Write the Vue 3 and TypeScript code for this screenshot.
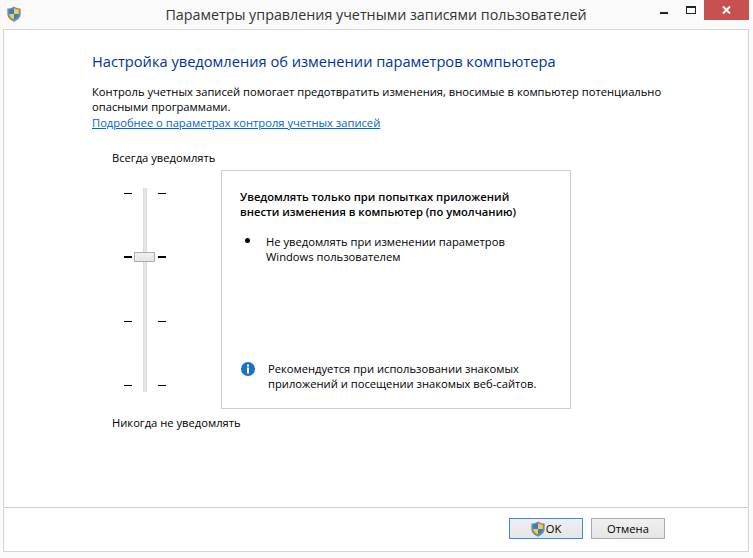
<script setup lang="ts">
const ticks = [0, 1, 2, 3]
</script>

<template>
  <div class="window">
    <header class="titlebar">
      <svg class="app-icon" viewBox="0 0 16 18" width="14" height="16">
        <path d="M8 .3 C10.5 2 12.8 2.6 15.6 2.6 V9 C15.6 13 12.4 15.8 8 17.8 C3.6 15.8 .4 13 .4 9 V2.6 C3.2 2.6 5.5 2 8 .3Z" fill="#7d8a96" />
        <path d="M8 2.5 V9 H2.5 V4.2 C4.5 4.1 6.2 3.5 8 2.5Z" fill="#2f7fd6" />
        <path d="M8 2.5 C9.8 3.5 11.5 4.1 13.5 4.2 V9 H8Z" fill="#f6cf3a" />
        <path d="M2.5 9 H8 V15.4 C5 14 2.9 12 2.5 9Z" fill="#f6cf3a" />
        <path d="M8 9 H13.5 C13.1 12 11 14 8 15.4Z" fill="#2f7fd6" />
      </svg>
      <h1 class="title">Параметры управления учетными записями пользователей</h1>
      <div class="controls">
        <span class="ctl"><i class="min"></i></span>
        <span class="ctl"><i class="max"></i></span>
        <span class="close">
          <svg viewBox="0 0 9 8" width="9" height="8"><path d="M1 .5 8 7.5M8 .5 1 7.5" stroke="#fff" stroke-width="2" /></svg>
        </span>
      </div>
    </header>

    <main class="client">
      <section class="body">
        <h2 class="heading">Настройка уведомления об изменении параметров компьютера</h2>
        <p class="intro">Контроль учетных записей помогает предотвратить изменения, вносимые в компьютер потенциально опасными программами.</p>
        <a class="link">Подробнее о параметрах контроля учетных записей</a>

        <div class="settings">
          <div class="slider-col">
            <div class="label">Всегда уведомлять</div>
            <div class="slider">
              <div class="ticks">
                <i v-for="t in ticks" :key="t" :class="{ strong: t === 1 }"></i>
              </div>
              <div class="track"><div class="thumb"></div></div>
              <div class="ticks">
                <i v-for="t in ticks" :key="t" :class="{ strong: t === 1 }"></i>
              </div>
            </div>
            <div class="label">Никогда не уведомлять</div>
          </div>

          <div class="card">
            <div class="card-title">Уведомлять только при попытках приложений<br />внести изменения в компьютер (по умолчанию)</div>
            <div class="bullet"><span class="dot"></span><span>Не уведомлять при изменении параметров<br />Windows пользователем</span></div>
            <div class="note">
              <svg class="info" viewBox="0 0 14 14" width="14" height="14">
                <circle cx="7" cy="7" r="7" fill="#1a72c4" />
                <rect x="6" y="2.5" width="2" height="2" fill="#fff" />
                <rect x="6" y="5.5" width="2" height="6" fill="#fff" />
              </svg>
              <span>Рекомендуется при использовании знакомых<br />приложений и посещении знакомых веб-сайтов.</span>
            </div>
          </div>
        </div>
      </section>

      <footer class="footer">
        <button class="btn primary">
          <svg viewBox="0 0 16 18" width="14" height="16">
            <path d="M8 .3 C10.5 2 12.8 2.6 15.6 2.6 V9 C15.6 13 12.4 15.8 8 17.8 C3.6 15.8 .4 13 .4 9 V2.6 C3.2 2.6 5.5 2 8 .3Z" fill="#7d8a96" />
            <path d="M8 2.5 V9 H2.5 V4.2 C4.5 4.1 6.2 3.5 8 2.5Z" fill="#2f7fd6" />
            <path d="M8 2.5 C9.8 3.5 11.5 4.1 13.5 4.2 V9 H8Z" fill="#f6cf3a" />
            <path d="M2.5 9 H8 V15.4 C5 14 2.9 12 2.5 9Z" fill="#f6cf3a" />
            <path d="M8 9 H13.5 C13.1 12 11 14 8 15.4Z" fill="#2f7fd6" />
          </svg>
          OK
        </button>
        <button class="btn">Отмена</button>
      </footer>
    </main>
  </div>
</template>

<style>
html, body { margin: 0; background: #fafafa; }
</style>

<style scoped>
.window {
  width: 753px;
  height: 558px;
  box-sizing: border-box;
  padding: 0 4px 6px 3px;
  display: flex;
  flex-direction: column;
  background: #fafafa;
  font-family: "Open Sans", "Noto Sans", sans-serif;
  font-size: 11.2px;
  color: #000;
  overflow: hidden;
}
.titlebar {
  height: 29px;
  flex: none;
  display: flex;
  align-items: flex-start;
  position: relative;
}
.app-icon { margin: 6px 0 0 4px; }
.title {
  margin: 0;
  position: absolute;
  left: 0;
  right: 0;
  top: 5px;
  text-align: center;
  font-weight: 400;
  font-size: 14.3px;
  line-height: 20px;
  color: #333;
}
.controls {
  margin-left: auto;
  display: flex;
  position: relative;
  align-items: flex-start;
}
.ctl { width: 27px; height: 20px; display: flex; align-items: center; justify-content: center; }
.min { display: block; width: 8px; height: 2px; background: #222; margin-top: 6px; }
.max { display: block; width: 8px; height: 5px; border: 1px solid #222; border-top-width: 2px; }
.close {
  width: 45px;
  height: 20px;
  background: #c75050;
  display: flex;
  align-items: center;
  justify-content: center;
}
.client {
  flex: 1;
  display: flex;
  flex-direction: column;
  background: #fff;
  border: 1px solid #d4d4d4;
}
.body { flex: 1; padding: 21px 0 0 88px; }
.heading {
  margin: 0;
  font-size: 14.65px;
  font-weight: 400;
  line-height: 20px;
  color: #003399;
}
.intro {
  margin: 13px 0 0;
  width: 585px;
  line-height: 15px;
}
.link {
  display: block;
  margin-top: 1px;
  line-height: 15px;
  color: #0066cc;
  text-decoration: underline;
}
.settings {
  display: flex;
  margin-top: 20px;
  margin-left: 20px;
}
.slider-col { width: 109px; flex: none; }
.label { line-height: 15px; white-space: nowrap; }
.slider {
  display: flex;
  margin: 23px 0 0 12px;
  width: 42px;
  height: 204px;
  justify-content: space-between;
}
.ticks {
  display: flex;
  flex-direction: column;
  gap: 63px;
  padding-top: 5px;
}
.ticks i { display: block; width: 8px; height: 1px; background: #000; }
.ticks i.strong { height: 2px; margin-top: -1px; }
.track {
  width: 2px;
  background: #e6e6e6;
  border-left: 1px solid #dadada;
  border-right: 1px solid #dadada;
  position: relative;
}
.thumb {
  position: absolute;
  left: -10px;
  top: 64px;
  width: 19px;
  height: 8px;
  background: linear-gradient(#f0f0f0, #e5e5e5);
  border: 1px solid #acacac;
}
.slider-col .label:last-child { margin-top: 23px; }
.card {
  width: 350px;
  height: 239px;
  flex: none;
  margin-top: 20px;
  border: 1px solid #ccc;
  padding: 18px 0 0 18px;
  display: flex;
  flex-direction: column;
  box-sizing: border-box;
  line-height: 15px;
}
.card-title { font-weight: 600; }
.bullet { display: flex; margin: 15px 0 0 5px; }
.dot {
  width: 5px;
  height: 5px;
  border-radius: 50%;
  background: #000;
  margin: 4px 16px 0 0;
  flex: none;
}
.note {
  margin-top: auto;
  margin-bottom: 17px;
  margin-left: 1px;
  display: flex;
  gap: 13px;
}
.info { margin-top: 1px; flex: none; }
.footer {
  height: 44px;
  border-top: 1px solid #cfcfcf;
  flex: none;
  display: flex;
  justify-content: flex-end;
  gap: 8px;
  padding: 10px 83px 0 0;
  box-sizing: border-box;
  background: #fff;
}
.btn {
  width: 74px;
  height: 21px;
  padding: 0;
  font: inherit;
  color: #000;
  background: linear-gradient(#f0f0f0, #e5e5e5);
  border: 1px solid #acacac;
  display: flex;
  align-items: center;
  justify-content: center;
  gap: 1px;
}
.btn.primary { border-color: #3c8be0; }
</style>
